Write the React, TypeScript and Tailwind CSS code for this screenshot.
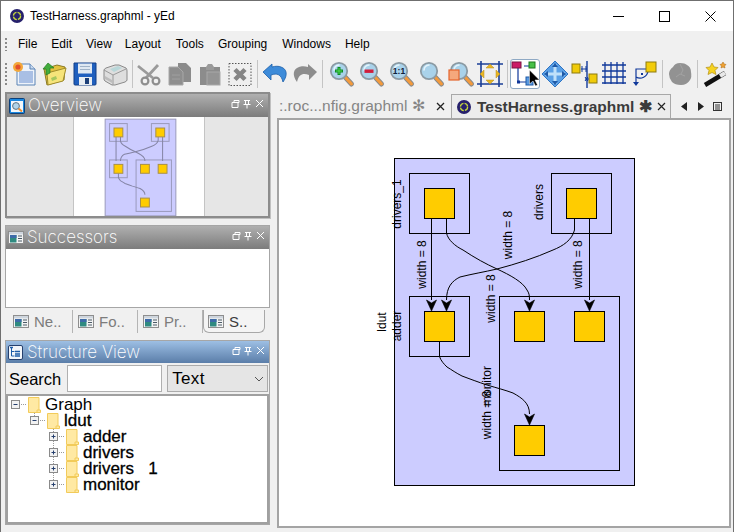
import React from "react";

const ARIAL = "font-['Liberation_Sans',Arial,sans-serif]";

const Svg = ({ children, s = 26 }: { children: React.ReactNode; s?: number }) => (
  <svg width={s} height={s} viewBox={`0 0 ${s} ${s}`} className="block overflow-visible">{children}</svg>
);

const YedLogo = ({ s = 14 }: { s?: number }) => (
  <svg width={s} height={s} viewBox="0 0 14 14" className="block shrink-0">
    <circle cx="7" cy="7" r="7" fill="#26206c" />
    <circle cx="7" cy="7" r="3.6" fill="none" stroke="#c6d83c" strokeWidth="1.3" strokeDasharray="4.6 1.1" />
  </svg>
);

const Mag = ({ children, glass = "#a9d2ea" }: { children?: React.ReactNode; glass?: string }) => (
  <Svg>
    <g transform="translate(2 0)">
      <path d="M16.500 16.500L22.500 23" stroke="#8a8a8a" strokeWidth="5" strokeLinecap="round" />
      <path d="M16.500 16.500L22.500 23" stroke="#f39a3c" strokeWidth="3" strokeLinecap="round" />
      <circle cx="10" cy="10" r="8.200" fill={glass} stroke="#8b9aa3" strokeWidth="1.800" />
      <path d="M5 9a5.500 5.500 0 0 1 5-5" stroke="#e4f3fb" strokeWidth="1.600" fill="none" strokeLinecap="round" />
      {children}
    </g>
  </Svg>
);

const icons: Record<string, React.ReactNode> = {
  new: (
    <Svg>
      <path d="M5 3h13l5 5v16H5z" fill="#eef3fa" stroke="#5b83b5" />
      <path d="M18 3v5h5" fill="#c9d9ee" stroke="#5b83b5" />
      <rect x="7" y="10" width="14" height="12" fill="#a9bfe4" />
      <circle cx="6" cy="6" r="5" fill="#f3a83a" />
      <circle cx="6" cy="6" r="2.600" fill="#e2502c" />
    </Svg>
  ),
  open: (
    <Svg>
      <path d="M2 8l13-4 8 2-1 13-17 5z" fill="#e3c23e" stroke="#8b7a24" />
      <path d="M5 12l19-5-3 13-15 4z" fill="#f6e47a" stroke="#a08c2c" />
      <path d="M4 14V8h-3l5-6 6 5H8v5z" fill="#42ad3c" stroke="#227a22" strokeWidth=".7" />
      <path d="M9 17l5-2 1 3-5 2z" fill="#a6c75e" />
    </Svg>
  ),
  save: (
    <Svg>
      <path d="M2 2h22v21a1 1 0 0 1-1 1H3a1 1 0 0 1-1-1z" fill="#1f5fbe" stroke="#123f86" />
      <rect x="6" y="2.500" width="14" height="10" fill="#dfe8f2" />
      <path d="M8 5.500h10M8 8.500h10" stroke="#9fb2c8" />
      <rect x="7" y="16" width="13" height="8" fill="#e8edf2" />
      <rect x="13" y="17" width="4" height="6" fill="#1c3f78" />
    </Svg>
  ),
  print: (
    <Svg>
      <path d="M2 9q0-1 2-2l9-3q2 0 4 0l7 3q1 1 1 3v9q0 1-2 2l-10 3q-2 0-3 0l-7-4q-1-1-1-2z" fill="#dedede" stroke="#8a8a8a" />
      <path d="M2 9l9 5 13-6" fill="none" stroke="#9a9a9a" />
      <path d="M11 14v10" stroke="#9a9a9a" />
      <path d="M8 8l8-3 4 2-8 4z" fill="#b9d7d9" />
      <path d="M3 15l7 4v3l-7-4z" fill="#bdbdbd" />
    </Svg>
  ),
  cut: (
    <Svg>
      <path d="M1 5l15 12M21 4L9 17" stroke="#9a9a9a" strokeWidth="2.800" fill="none" />
      <circle cx="19" cy="20" r="3.400" fill="none" stroke="#8e8e8e" strokeWidth="2.200" />
      <circle cx="8" cy="20" r="3.400" fill="none" stroke="#8e8e8e" strokeWidth="2.200" />
    </Svg>
  ),
  copy: (
    <Svg>
      <path d="M11 2h8l5 5v14H11z" fill="#8b8b8b" />
      <path d="M2 6h9l5 5v13H2z" fill="#8e8e8e" stroke="#a8a8a8" />
      <path d="M5 14h8M5 18h8" stroke="#9f9f9f" />
    </Svg>
  ),
  paste: (
    <Svg>
      <path d="M3 6h20v18H3z" fill="#8c8c8c" />
      <path d="M9 6l2-3h4l2 3v3H9z" fill="#9a9a9a" />
      <rect x="10" y="11" width="13" height="13" fill="#949494" stroke="#a8a8a8" />
    </Svg>
  ),
  del: (
    <Svg>
      <rect x="2" y="2.500" width="22" height="22" fill="#efefef" stroke="#555" strokeDasharray="1.500 1.500" />
      <path d="M8 8.500l10 10M18 8.500l-10 10" stroke="#858585" strokeWidth="4.500" />
    </Svg>
  ),
  undo: (
    <Svg>
      <path d="M10 6V3L1 11l8 8v-5c6-2 10-1 12 7 5-7 4-13-2-15-2-1-6-1-9 0z" fill="#3d8bd9" stroke="#1a5eaa" strokeWidth=".8" />
    </Svg>
  ),
  redo: (
    <Svg>
      <path d="M16 6V3l9 8-8 8v-5c-6-2-10-1-12 7C0 14 1 8 7 6c2-1 6-1 9 0z" fill="#8d8d8d" />
    </Svg>
  ),
  zin: <Mag><path d="M10 6v8M6 10h8" stroke="#0c8c24" strokeWidth="3" /><path d="M10 7v6M7 10h6" stroke="#50dc50" strokeWidth="1" /></Mag>,
  zout: <Mag><rect x="5.500" y="8.500" width="9" height="3.400" fill="#d01e3c" /></Mag>,
  z11: <Mag><text x="10" y="13" textAnchor="middle" fontSize="8.500" fontWeight="700" fill="#10203a" fontFamily="Liberation Sans">1:1</text></Mag>,
  zfit: <Mag />,
  zsel: (
    <Mag>
      <rect x="0" y="9" width="10" height="10" fill="#f5a87c" stroke="#e4642c" strokeWidth="1.200" />
    </Mag>
  ),
  content: (
    <Svg>
      <path d="M4 0v26M22 0v26M0 3h26M0 23h26" stroke="#1b3f96" strokeWidth="1.600" />
      <circle cx="13" cy="13" r="7.500" fill="#efefef" />
      <path d="M13 3l4 4H9zM13 23l4-4H9zM3 13l4-4v8zM23 13l-4-4v8z" fill="#e8b526" stroke="#b48c1c" strokeWidth=".5" />
    </Svg>
  ),
  edit: (
    <Svg>
      <path d="M6 7v14h14M12 5h6" stroke="#10389a" strokeWidth="1.200" fill="none" />
      <rect x="0" y="1" width="9" height="6" fill="#cc1a66" stroke="#7a1444" />
      <rect x="17" y="1" width="6" height="6" fill="#48c048" stroke="#1d7a1d" />
      <rect x="14" y="16" width="7" height="8" fill="#5a9ae0" stroke="#1f5aa8" />
      <rect x="5" y="19.500" width="3" height="3" fill="#10389a" />
      <path d="M17.500 9l0 14 3.500-3 2.500 5 2-1-2.500-5h4.500z" fill="#000" stroke="#fff" strokeWidth=".5" />
    </Svg>
  ),
  move: (
    <Svg>
      <path d="M13 0l13 13-13 13L0 13z" fill="#5aa0e6" stroke="#2e74c4" />
      <path d="M13 3v20M3 13h20" stroke="#bfe0fa" strokeWidth="3" />
      <path d="M13 2l3 4h-6zM13 24l3-4h-6zM2 13l4-3v6zM24 13l-4-3v6z" fill="#1e5aa8" />
    </Svg>
  ),
  snap: (
    <Svg>
      <rect x="0" y="3" width="8" height="9" fill="#f0cb0a" stroke="#8c7a10" />
      <rect x="17" y="13" width="8" height="9" fill="#f0cb0a" stroke="#8c7a10" />
      <path d="M15 0v27" stroke="#10389a" strokeWidth="1.400" />
      <path d="M9 8h6M10 5v6M14 5v6M13 18h4" stroke="#10389a" />
      <path d="M13 16l3 4M16 16l-3 4" stroke="#10389a" />
    </Svg>
  ),
  grid: (
    <Svg>
      <path d="M3 1v22M9 1v22M15 1v22M21 1v22M0 4h24M0 10h24M0 16h24M0 22h24" stroke="#10389a" strokeWidth="1.300" />
    </Svg>
  ),
  ortho: (
    <Svg>
      <path d="M4 22V8h12v2a8 8 0 0 1-12 6" fill="none" stroke="#10389a" strokeWidth="1.200" />
      <rect x="9" y="12" width="2" height="2" fill="#10389a" />
      <path d="M1 21h6l-3 4z" fill="#10389a" />
      <rect x="14" y="1" width="10" height="10" fill="#f2cc0a" stroke="#8c7a10" />
    </Svg>
  ),
  blob: (
    <Svg>
      <path d="M6 6q2-4 7-4t7 2q4 2 4 7 1 5-1 8-3 5-9 5-6 0-9-3-3-4-3-8t4-7z" fill="#929292" />
      <path d="M13 3l3 6-2 4" stroke="#a3a3a3" fill="none" />
      <path d="M9 16l4-3 5 2" stroke="#a3a3a3" fill="none" />
    </Svg>
  ),
  wand: (
    <Svg>
      <path d="M3 24L23 12" stroke="#111" strokeWidth="4.500" />
      <path d="M18 15l5-3" stroke="#e8e8e8" strokeWidth="4" />
      <path d="M10 2l2 4 4 .5-3 3 1 4-4-2-4 2 1-4-3-3 4-.5z" fill="#f6d320" stroke="#b38f16" strokeWidth=".7" />
      <path d="M21 1l1 2 2 .5-1.500 1.500.5 2-2-1-2 1 .5-2L18 3.500l2-.5z" fill="#f2a232" stroke="#b07018" strokeWidth=".6" />
    </Svg>
  ),
};

const Btn = ({ k, active }: { k: string; active?: boolean }) => (
  <div className={`w-[30px] h-[30px] flex items-center justify-center shrink-0 rounded-[3px] ${active ? "bg-white border border-[#8fa9c4]" : ""}`}>
    {icons[k]}
  </div>
);
const Sep = () => (
  <div className="w-[5px] flex justify-center shrink-0"><div className="w-px h-[28px] bg-[#c4c4c4]" /></div>
);

const Grip = ({ h }: { h: string }) => (
  <div className={`${h} w-[2px] shrink-0 bg-[radial-gradient(circle,#8a8a8a_1px,transparent_1px)] bg-[length:2px_4px]`} />
);

const PanelButtons = () => (
  <svg width="36" height="12" viewBox="0 0 36 12" className="block shrink-0">
    <path d="M3 4.500h5v-2H3v2M1 4.500h6v5H1z" fill="none" stroke="#fff" />
    <path d="M13 2.500h6M14.500 2.500v4M17.500 2.500v4M12.500 6.500h7M16 6.500v4" fill="none" stroke="#fff" />
    <path d="M25 2l7 7M32 2l-7 7" stroke="#fff" />
  </svg>
);

const WinIcon = ({ w = 16 }: { w?: number }) => (
  <svg width={w} height="13" viewBox="0 0 16 13" className="block shrink-0">
    <rect x=".5" y=".5" width="15" height="12" fill="#f4f4f4" stroke="#8e8e8e" />
    <rect x="1" y="1" width="14" height="2.400" fill="#cfd6de" />
    <rect x="2" y="4" width="6.500" height="7.500" fill="#2f8a80" />
    <rect x="2" y="4" width="6.500" height="3" fill="#3d6aa8" />
    <path d="M10 5h4M10 7.500h4M10 10h4" stroke="#4a5a66" />
  </svg>
);

const MagWin = () => (
  <svg width="16" height="16" viewBox="0 0 16 16" className="block shrink-0">
    <rect x=".5" y=".5" width="15" height="15" rx="1" fill="#1a88e0" stroke="#0d3f78" />
    <rect x="2" y="3" width="12" height="11" fill="#f4f8fb" />
    <circle cx="7" cy="8" r="3.400" fill="#b0d4ea" stroke="#5f7483" />
    <path d="M9.500 10.500l3.500 3" stroke="#ef8f30" strokeWidth="2" />
  </svg>
);

const TreeWin = () => (
  <svg width="15" height="15" viewBox="0 0 15 15" className="block shrink-0">
    <rect x=".5" y=".5" width="14" height="14" rx="1.500" fill="#f3f6fa" stroke="#26406e" />
    <path d="M3.500 3v8h3M3.500 6.500h3" stroke="#1c5ca8" fill="none" />
    <path d="M2 2.500h3M7 6.500h5M7 11h5M7 9h5" stroke="#1c5ca8" strokeWidth="1.300" />
  </svg>
);

const Header = ({ icon, title, blue, h }: { icon: React.ReactNode; title: string; blue?: boolean; h: string }) => (
  <div className={`${h} shrink-0 flex items-center pl-[2px] pr-[1px] ${blue ? "bg-gradient-to-b from-[#9dbfe4] to-[#5b7ea9]" : "bg-gradient-to-b from-[#b0b0b0] to-[#7c7c7c]"}`}>
    <div className="w-[17px] shrink-0">{icon}</div>
    <span className="ml-[2px] text-[17px] leading-none text-white flex-1 font-['Inter',sans-serif] font-extralight">{title}</span>
    <div className="-mt-[3px]"><PanelButtons /></div>
  </div>
);

const Arrow = ({ x, y, fill = "#000" }: { x: number; y: number; fill?: string }) => (
  <path d={`M${x} ${y}L${x - 5} ${y - 11}L${x} ${y - 8}L${x + 5} ${y - 11}Z`} fill={fill} stroke={fill} strokeWidth=".6" />
);

const E1 = "M446.500 218.500V233C448 240 455 246 463 250C475 258 486 264 497 269C510 275 523 282 527 290C529 293 529.500 295 529.500 300";
const E2 = "M574.500 218.500V230C572 240 563 246 553 250C535 258 516 264 497 269C484 272 472 274 460 277C452 281 446.500 287 446.500 300";
const E3 = "M439.500 341.500V356.500C441 361 444 364 447 367C452 370 456 373 462 376C470 379 478 382 487 385C497 388 505 390 513 393C522 398 529.500 403 529.500 414";

const Groups = ({ stroke, fill, node, sw, ns }: { stroke: string; fill: string; node: string; sw: string; ns?: string }) => (
  <>
    <rect x="394.500" y="158.500" width="240" height="327" fill={fill} stroke={stroke} />
    {[[409.500, 173.500], [551.500, 173.500], [409.500, 296.500]].map(([x, y]) => (
      <rect key={`${x}${y}`} x={x} y={y} width="60" height="60" fill="none" stroke={stroke} />
    ))}
    <rect x="499.500" y="296.500" width="120" height="174" fill="none" stroke={stroke} />
    <g stroke={sw} fill="none">
      <path d="M431.500 218.500V300M589.500 218.500V300" />
      <path d={E1} />
      <path d={E2} />
      <path d={E3} />
    </g>
    {[[424.500, 188.500], [566.500, 188.500], [424.500, 311.500], [514.500, 311.500], [574.500, 311.500], [514.500, 425.500]].map(([x, y]) => (
      <rect key={`n${x}${y}`} x={x} y={y} width="30" height="30" fill={node} stroke={ns ?? stroke} />
    ))}
  </>
);

const labels: [string, number, number][] = [
  ["drivers_1", 398, 204],
  ["drivers", 540, 202],
  ["width = 8", 423, 264.500],
  ["width = 8", 509, 235],
  ["width = 8", 492, 298.500],
  ["width = 8", 579, 264.500],
  ["ldut", 383, 322],
  ["adder", 398, 326],
  ["monitor", 488, 386],
  ["width = 8", 488, 415],
];

const Diagram = () => (
  <svg viewBox="279 120 450 406" width="450" height="406" className="block">
    <Groups stroke="#000" fill="#ccccff" node="#ffcc00" sw="#000" />
    <Arrow x={431.500} y={311} />
    <Arrow x={446.500} y={311} />
    <Arrow x={529.500} y={311} />
    <Arrow x={589.500} y={311} />
    <Arrow x={529.500} y={425} />
    {labels.map(([t, x, y], i) => (
      <text key={i} x={x} y={y} transform={`rotate(-90 ${x} ${y})`} textAnchor="middle" dominantBaseline="middle" fontSize="12" fontFamily="Liberation Sans" fill="#000">
        {t}
      </text>
    ))}
  </svg>
);

const Mini = () => (
  <svg viewBox="394 158 241 328" width="71" height="97" preserveAspectRatio="none" className="block overflow-visible">
    <g strokeWidth="3.400">
      <Groups stroke="#9a9abc" fill="#ccccff" node="#ffcc00" sw="#8484a4" ns="#a8904a" />
    </g>
  </svg>
);

const Folder = () => (
  <svg width="13" height="16" viewBox="0 0 13 16" className="block shrink-0">
    <path d="M.5.500h10.500v12.500h1.500v2.500H.5z" fill="#ffe9a3" stroke="#f2cb5a" />
    <path d="M11 13h-2v2.500" fill="none" stroke="#f2cb5a" />
  </svg>
);

const Handle = ({ open, top, bottom }: { open?: boolean; top?: boolean; bottom?: boolean }) => (
  <svg width="17" height="16" viewBox="0 0 17 16" className="block shrink-0">
    {top && <path d="M4.500 0v3" stroke="#9a9a9a" strokeDasharray="1 1" />}
    {bottom && <path d="M4.500 12v4" stroke="#9a9a9a" strokeDasharray="1 1" />}
    <rect x=".5" y="3.500" width="8" height="8" fill="#f2f2f2" stroke="#8a8a8a" />
    <path d="M2.500 7.500h4" stroke="#26406e" />
    {!open && <path d="M4.500 5.500v4" stroke="#26406e" />}
    <path d="M10 7.500h5" stroke="#9a9a9a" strokeDasharray="1 1" />
  </svg>
);

const Row = ({ pl, open, text, dark, top, bottom }: { pl: string; open?: boolean; text: string; dark?: boolean; top?: boolean; bottom?: boolean }) => (
  <div className={`flex h-4 items-center ${pl}`}>
    <Handle open={open} top={top} bottom={bottom} />
    <Folder />
    <span className={`ml-[4px] text-[17px] leading-4 text-black whitespace-pre ${ARIAL} ${dark ? "[-webkit-text-stroke:0.3px_#000]" : ""}`}>{text}</span>
  </div>
);

const SideTab = ({ t, sel, w }: { t: string; sel?: boolean; w: string }) => (
  <div className={`${w} h-[23px] flex items-center gap-[5px] shrink-0 ${sel ? "pl-[4px] rounded-b-[6px] border border-t-0 border-[#a8a8a8] bg-[#f4f4f4]" : "pl-[5px] border-r border-[#b4b4b4]"}`}>
    <WinIcon />
    <span className={`text-[15px] leading-none ${sel ? "text-[#3c3c3c]" : "text-[#7c7c7c]"} ${ARIAL}`}>{t}</span>
  </div>
);

const menus: [string, string][] = [
  ["File", "ml-[11px]"],
  ["Edit", "ml-[14px]"],
  ["View", "ml-[14px]"],
  ["Layout", "ml-[13px]"],
  ["Tools", "ml-[15px]"],
  ["Grouping", "ml-[14px]"],
  ["Windows", "ml-[15px]"],
  ["Help", "ml-[14px]"],
];

export default function App() {
  return (
    <div className={`relative w-[734px] h-[532px] overflow-hidden bg-[#f0f0f0] border border-b-0 border-[#6f6f6f] flex flex-col ${ARIAL}`}>
      <div className="h-[30px] shrink-0 bg-white flex items-center pl-[9px]">
        <YedLogo />
        <span className="ml-[6px] text-[12px] text-black">TestHarness.graphml - yEd</span>
        <div className="ml-auto flex items-center">
          <div className="w-[46px] flex justify-center"><div className="w-[11px] h-px bg-black" /></div>
          <div className="w-[46px] flex justify-center"><div className="w-[11px] h-[11px] border border-black" /></div>
          <div className="w-[46px] flex justify-center">
            <svg width="11" height="11" viewBox="0 0 11 11"><path d="M.5.500l10 10M10.500.500l-10 10" stroke="#000" /></svg>
          </div>
        </div>
      </div>

      <div className="h-[26px] shrink-0 flex items-center pl-[4px]">
        <Grip h="h-[14px]" />
        {menus.map(([m, c]) => (
          <span key={m} className={`${c} text-[12px] text-black`}>{m}</span>
        ))}
      </div>

      <div className="h-[33px] shrink-0 flex items-center pl-[4px]">
        <Grip h="h-[24px]" />
        <div className="ml-[3px] flex items-center">
          {["new", "open", "save", "print"].map((k) => <Btn key={k} k={k} />)}
          <Sep />
          {["cut", "copy", "paste", "del"].map((k) => <Btn key={k} k={k} />)}
          <Sep />
          {["undo", "redo"].map((k) => <Btn key={k} k={k} />)}
          <Sep />
          {["zin", "zout", "z11", "zfit", "zsel", "content"].map((k) => <Btn key={k} k={k} />)}
          <Sep />
          <Btn k="edit" active />
          {["move", "snap", "grid", "ortho"].map((k) => <Btn key={k} k={k} />)}
          <Sep />
          <Btn k="blob" />
          <Sep />
          <Btn k="wand" />
        </div>
      </div>

      <div className="flex-1 flex min-h-0 pl-[4px]">
        <div className="w-[265px] shrink-0 pt-[2px] flex flex-col">
          <div className="h-[126px] shrink-0 flex flex-col border-2 border-[#8c8c8c] shadow-[1px_1px_0_#c0c0c0]">
            <Header icon={<MagWin />} title="Overview" h="h-[23px]" />
            <div className="flex-1 bg-[#e6e6e6] flex justify-center min-h-0 pl-[2px]">
              <div className="w-[132px] bg-white border-x border-[#c4c4c4] flex justify-center pt-[2px] pl-[4px] overflow-hidden">
                <Mini />
              </div>
            </div>
          </div>

          <div className="mt-[7px] h-[83px] shrink-0 flex flex-col border border-[#a6a6a6] bg-white">
            <Header icon={<WinIcon />} title="Successors" h="h-[23px]" />
            <div className="flex-1" />
          </div>

          <div className="mt-[2px] h-[23px] shrink-0 flex pl-[3px]">
            <SideTab t="Ne.." w="w-[65px]" />
            <SideTab t="Fo.." w="w-[65px]" />
            <SideTab t="Pr.." w="w-[65px]" />
            <SideTab t="S.." sel w="w-[62px]" />
          </div>

          <div className="mt-[7px] h-[185px] shrink-0 flex flex-col border border-[#a6a6a6] bg-[#f0f0f0]">
            <Header icon={<TreeWin />} title="Structure View" blue h="h-[22px]" />
            <div className="h-[31px] shrink-0 flex items-center pl-[3px] pr-[1px]">
              <span className="pt-[2px] text-[16.500px] leading-none text-black">Search</span>
              <div className="ml-[6px] w-[95px] h-[27px] bg-white border border-[#b0b0b0]" />
              <div className="ml-[5px] flex-1 h-[27px] bg-[#e5e5e5] border border-[#ababab] flex items-center pl-[4px] pr-[3px]">
                <span className="text-[17px] leading-none text-black tracking-[0.3px] flex-1">Text</span>
                <svg width="10" height="6" viewBox="0 0 10 6"><path d="M1 1l4 4 4-4" fill="none" stroke="#555" /></svg>
              </div>
            </div>
            <div className="flex-1 bg-white border-2 border-[#a0a0a0] pt-[1px]">
              <Row pl="pl-[3px]" open text="Graph" />
              <Row pl="pl-[22px]" open top text="ldut" dark />
              <Row pl="pl-[41px]" top bottom text="adder" dark />
              <Row pl="pl-[41px]" top bottom text="drivers" dark />
              <Row pl="pl-[41px]" top bottom text="drivers   1" dark />
              <Row pl="pl-[41px]" top text="monitor" dark />
            </div>
          </div>
        </div>

        <div className="ml-[7px] w-[454px] shrink-0 pt-[2px] flex flex-col">
          <div className="h-[26px] shrink-0 flex items-end">
            <div className="w-[174px] h-[24px] flex items-center overflow-hidden">
              <span className="ml-[2px] text-[15.500px] leading-none text-[#858585] whitespace-nowrap">:.roc...nfig.graphml ✻</span>
              <svg className="ml-auto mr-[6px] shrink-0" width="9" height="9" viewBox="0 0 9 9"><path d="M1 1l7 7M8 1l-7 7" stroke="#222" strokeWidth="1.300" /></svg>
            </div>
            <div className="w-[220px] h-[24px] bg-[#ececec] border border-b-0 border-[#a8a8a8] flex items-center pl-[5px]">
              <YedLogo />
              <span className="ml-[6px] text-[15.500px] leading-none font-bold text-[#3b3b3b] whitespace-nowrap">TestHarness.graphml ✱</span>
              <svg className="ml-auto mr-[4px] shrink-0" width="9" height="9" viewBox="0 0 9 9"><path d="M1 1l7 7M8 1l-7 7" stroke="#222" strokeWidth="1.200" /></svg>
            </div>
            <div className="flex-1 h-[24px] flex items-center pl-[10px] gap-[11px]">
              <svg width="6" height="9" viewBox="0 0 6 9"><path d="M6 0v9L0 4.500z" fill="#222" /></svg>
              <svg width="6" height="9" viewBox="0 0 6 9"><path d="M0 0v9l6-4.500z" fill="#222" /></svg>
              <svg className="-ml-[2px]" width="9" height="9" viewBox="0 0 9 9"><rect x=".5" y=".5" width="8" height="8" fill="none" stroke="#333" /><path d="M2 3h5M2 5h5M2 7h5" stroke="#333" /></svg>
            </div>
          </div>
          <div className="h-[410px] shrink-0 bg-white border-2 border-[#a4a4a4]">
            <Diagram />
          </div>
        </div>
      </div>
    </div>
  );
}
